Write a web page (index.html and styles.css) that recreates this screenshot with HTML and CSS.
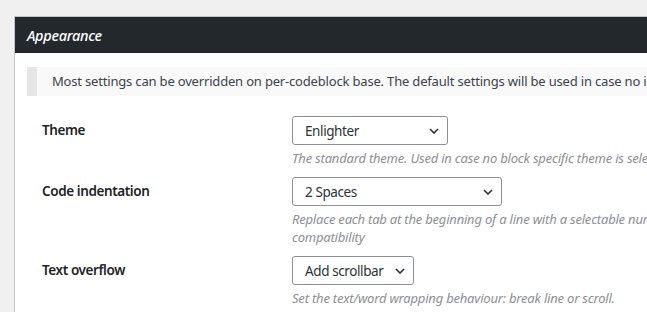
FILE: index.html
```html
<!DOCTYPE html>
<html>

<head>
    <title>Enlighter Settings</title>
    <link rel="stylesheet" href="styles.css">
</head>

<body>
    <div class="panel">
        <div class="panel-header">
            <h2>Appearance</h2>
        </div>

        <div class="panel-body">
            <p class="notice">Most settings can be overridden on per-codeblock base. The default settings will be used in case no individual settings are given.</p>

            <div class="row">
                <label class="label">Theme</label>
                <div class="field">
                    <div class="select select-theme">
                        <span>Enlighter</span>
                        <svg width="10" height="6" viewBox="0 0 10 6"><path d="M1 1l4 4 4-4" /></svg>
                    </div>
                    <p class="desc">The standard theme. Used in case no block specific theme is selected.</p>
                </div>
            </div>

            <div class="row">
                <label class="label">Code indentation</label>
                <div class="field">
                    <div class="select select-indent">
                        <span>2 Spaces</span>
                        <svg width="10" height="6" viewBox="0 0 10 6"><path d="M1 1l4 4 4-4" /></svg>
                    </div>
                    <p class="desc">Replace each tab at the beginning of a line with a selectable number of spaces to ensure cross-browser<br>compatibility</p>
                </div>
            </div>

            <div class="row">
                <label class="label">Text overflow</label>
                <div class="field">
                    <div class="select select-overflow">
                        <span>Add scrollbar</span>
                        <svg width="10" height="6" viewBox="0 0 10 6"><path d="M1 1l4 4 4-4" /></svg>
                    </div>
                    <p class="desc">Set the text/word wrapping behaviour: break line or scroll.</p>
                </div>
            </div>
        </div>
    </div>
</body>

</html>
```

FILE: styles.css
```css
html,
body {
    margin: 0;
    height: 100%;
    overflow: hidden;
}

body {
    background-color: #f0f0f1;
    font-family: "Noto Sans", sans-serif;
    color: #1d2327;
    padding: 16px 0 0 14px;
    box-sizing: border-box;
}

.panel {
    width: 1000px;
    background-color: #fff;
    border: 1px solid #c3c4c7;
    border-right: none;
    min-height: 400px;
}

.panel-header {
    background-color: #23282d;
    height: 36px;
    display: flex;
    align-items: center;
    padding-left: 12px;
}

.panel-header h2 {
    margin: 0;
    color: #fff;
    font-size: 14.5px;
    letter-spacing: -0.3px;
    font-style: italic;
    font-weight: 500;
}

.panel-body {
    padding: 14px 12px 0 12px;
}

.notice {
    margin: 0 0 10px 0;
    height: 29px;
    line-height: 29px;
    padding-left: 15px;
    border-left: 10px solid #e5e5e5;
    background-color: #f9f9fa;
    color: #3c434a;
    font-size: 13px;
    letter-spacing: -0.18px;
    white-space: nowrap;
}

.row {
    display: grid;
    grid-template-columns: 250px 1fr;
    padding: 10px 0 0 15px;
}

.label {
    font-size: 13.5px;
    font-weight: 600;
    letter-spacing: -0.4px;
    line-height: 29px;
    color: #1d2327;
}

.select {
    box-sizing: border-box;
    height: 29px;
    border: 1px solid #8c8f94;
    border-radius: 3px;
    display: flex;
    align-items: center;
    justify-content: space-between;
    padding: 0 8px 0 12px;
    font-size: 13.5px;
    letter-spacing: -0.4px;
    color: #2c3338;
}

.select svg path {
    fill: none;
    stroke: #2c3338;
    stroke-width: 1.6;
}

.select-theme {
    width: 156px;
}

.select-indent {
    width: 210px;
}

.select-overflow {
    width: 122px;
}

.desc {
    margin: 4px 0 0 0;
    font-size: 13px;
    line-height: 18px;
    letter-spacing: -0.2px;
    font-style: italic;
    color: #8c8f94;
    white-space: nowrap;
}
```
